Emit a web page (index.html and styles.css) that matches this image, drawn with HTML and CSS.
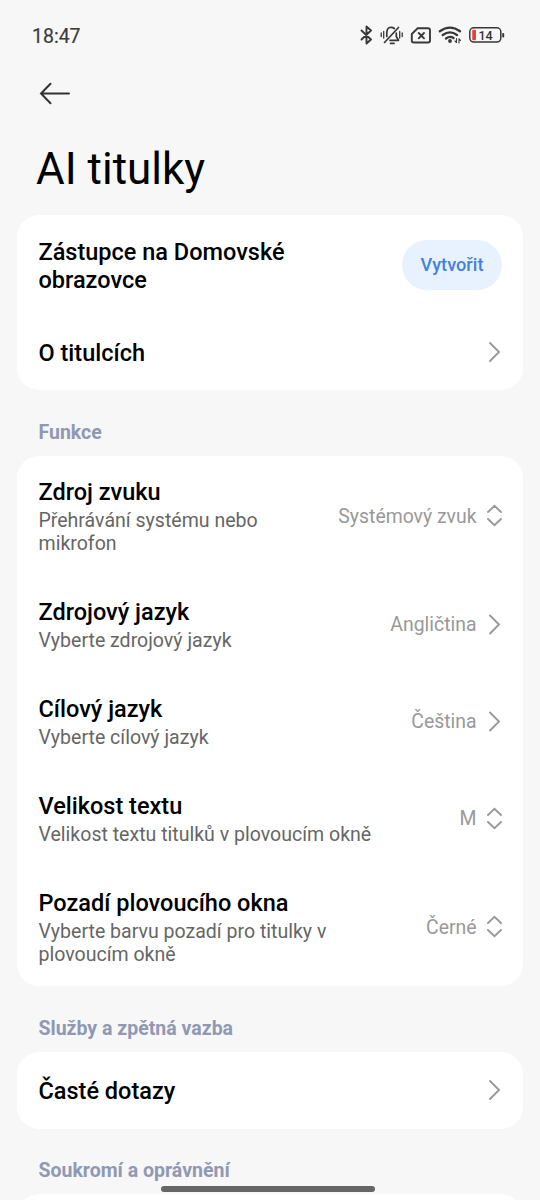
FILE: index.html
```html
<!DOCTYPE html>
<html lang="cs">
<head>
<meta charset="utf-8">
<title>AI titulky</title>
<link rel="stylesheet" href="styles.css">
</head>
<body>
<div class="screen">
  <header class="status">
    <span class="clock">18:47</span>
    <svg class="status-icons" width="148" height="24" viewBox="358 23 148 24">
      <g class="line">
        <path d="M361.500 30.500L371 39.500L366.500 43.500V26.500L371 30.500L361.500 39.500"/>
        <path class="bell" d="M386.800 36.500V33C386.800 26.500 392 26.500 394.300 28.500M396.300 33V36.500L398.500 40.300H390M390.500 43.300H394M384.500 42.500L398.500 27.500"/>
        <path class="waves" d="M383.700 31.500V38M381.200 33V36.500M399.700 31.500V38M402.200 33V36.500"/>
        <path d="M417.500 28.300H428Q430 28.300 430 30.300V40.500Q430 42.500 428 42.500H414Q411.800 42.500 411.800 40.500V34Z"/>
        <path d="M418.700 33L424 38.300M424 33L418.700 38.300"/>
        <path class="bold" d="M439.800 31.300Q450 24 460 31.300M442.800 35Q450 29.800 457 35M446 38.500Q450 35.500 453.500 38"/>
      </g>
      <circle class="solid" cx="450" cy="41" r="1.900"/>
      <path class="line fine" d="M456.500 38.500V42.500L455 41M459 43V38.800L460.500 40.300"/>
      <rect class="line thin" x="469.800" y="27.800" width="31" height="14.300" rx="4"/>
      <rect class="charge" x="472.200" y="29.700" width="3.800" height="10.500" rx="1"/>
      <rect class="solid" x="502.200" y="33" width="2" height="4.500" rx="1"/>
      <text class="level" x="478.500" y="39.500">14</text>
    </svg>
  </header>
  <svg class="back" width="32" height="24" viewBox="0 0 32 24"><path d="M30 11.500H2M11.500 1.800L2 11.500L11.500 21.200"/></svg>
  <h1>AI titulky</h1>
  <section class="card intro">
    <div class="row shortcut"><div class="label">Zástupce na Domovské<br>obrazovce</div><button class="create">Vytvořit</button></div>
    <div class="row about"><div class="label">O titulcích</div><svg class="arrow" width="16" height="24" viewBox="0 0 16 24"><path d="M4 3L13 12L4 21"/></svg></div>
  </section>
  <h2>Funkce</h2>
  <section class="card features">
    <div class="row tall"><div class="copy"><div class="label">Zdroj zvuku</div><p>Přehrávání systému nebo<br>mikrofon</p></div><span class="value">Systémový zvuk</span><svg class="arrow" width="16" height="24" viewBox="0 0 16 24"><path d="M2 8L8.500 1.800L15 8M2 15L8.500 21.200L15 15"/></svg></div>
    <div class="row"><div class="copy"><div class="label">Zdrojový jazyk</div><p>Vyberte zdrojový jazyk</p></div><span class="value">Angličtina</span><svg class="arrow" width="16" height="24" viewBox="0 0 16 24"><path d="M4 2.500L13 11.500L4 20.500"/></svg></div>
    <div class="row"><div class="copy"><div class="label">Cílový jazyk</div><p>Vyberte cílový jazyk</p></div><span class="value">Čeština</span><svg class="arrow" width="16" height="24" viewBox="0 0 16 24"><path d="M4 2.500L13 11.500L4 20.500"/></svg></div>
    <div class="row"><div class="copy"><div class="label">Velikost textu</div><p>Velikost textu titulků v plovoucím okně</p></div><span class="value">M</span><svg class="arrow" width="16" height="24" viewBox="0 0 16 24"><path d="M2 8L8.500 1.800L15 8M2 15L8.500 21.200L15 15"/></svg></div>
    <div class="row tall"><div class="copy"><div class="label">Pozadí plovoucího okna</div><p>Vyberte barvu pozadí pro titulky v<br>plovoucím okně</p></div><span class="value">Černé</span><svg class="arrow" width="16" height="24" viewBox="0 0 16 24"><path d="M2 8L8.500 1.800L15 8M2 15L8.500 21.200L15 15"/></svg></div>
  </section>
  <h2>Služby a zpětná vazba</h2>
  <section class="card faq"><div class="row"><div class="label">Časté dotazy</div><svg class="arrow" width="16" height="24" viewBox="0 0 16 24"><path d="M4 2L13 11L4 20"/></svg></div></section>
  <h2 class="last">Soukromí a oprávnění</h2>
  <section class="card privacy"></section>
  <div class="home-bar"></div>
</div>
</body>
</html>
```
FILE: styles.css
```css
* { box-sizing: border-box; }
body { margin: 0; background: #f7f7f7; font-family: Roboto, sans-serif; color: #000; }
.screen { position: relative; height: 1200px; overflow: hidden; padding: 0 17px; }
.status { display: flex; justify-content: space-between; height: 70px; padding: 23px 17px 0 15px; }
.clock { padding-top: 1px; font-size: 19.500px; line-height: 25px; font-weight: 400; color: #3c3c3c; -webkit-text-stroke: .2px #3c3c3c; }
.status-icons { display: block; }
.line { fill: none; stroke: #383838; stroke-width: 1.9; stroke-linecap: round; stroke-linejoin: round; }
.thin { stroke-width: 1.5; }
.bell { stroke-width: 1.7; }
.waves { stroke-width: 1.3; }
.bold { stroke-width: 2.3; }
.fine { stroke-width: 1.1; }
.solid { fill: #383838; }
.charge { fill: #e5443c; }
.level { font-size: 12.500px; font-weight: 500; fill: #333; }
.back { display: block; margin: 12px 0 0 22px; fill: none; stroke: #333; stroke-width: 2; stroke-linecap: round; }
h1 { margin: 34px 0 0 19px; height: 75px; font-size: 44px; line-height: 58px; font-weight: 400; }
h2 { margin: 0; padding: 27px 22px 0 21.500px; height: 66px; font-size: 19.500px; line-height: 32px; font-weight: 700; color: #9198b4; }
.last { height: 65px; padding-top: 26px; }
.card { background: #fff; border-radius: 22px; }
.row { display: flex; align-items: center; height: 97px; padding: 0 21px 0 21.500px; }
.label { padding-top: 2px; font-size: 23.500px; line-height: 28px; font-weight: 500; }
.shortcut .label { padding-top: 3px; }
.copy .label { padding-top: 0; }
.copy { padding-top: 1px; }
.label + p { margin-top: 3px; }
.faq .label { padding-top: 0; }
p { margin: 0; font-size: 19.550px; line-height: 23px; color: #666; white-space: nowrap; }
.arrow { flex: none; margin-left: auto; fill: none; stroke: #999; stroke-width: 1.9; stroke-linecap: round; }
.value { margin-left: auto; padding-top: 1px; font-size: 19.400px; line-height: 24px; color: #999; white-space: nowrap; }
.value + .arrow { margin-left: 9.500px; }
.tall { height: 120px; }
.intro { height: 175px; }
.shortcut { height: 99px; }
.about { height: 76px; }
.create { margin-left: auto; width: 100px; height: 50px; padding: 0; border: 0; border-radius: 25px; background: #e8f2fe; color: #4181df; font: 500 18.200px Roboto, sans-serif; }
.features { height: 530px; }
.faq .row { height: 77px; }
.privacy { height: 76px; }
.home-bar { position: absolute; left: 161px; top: 1186px; width: 214px; height: 6px; border-radius: 3px; background: #666; }
```
